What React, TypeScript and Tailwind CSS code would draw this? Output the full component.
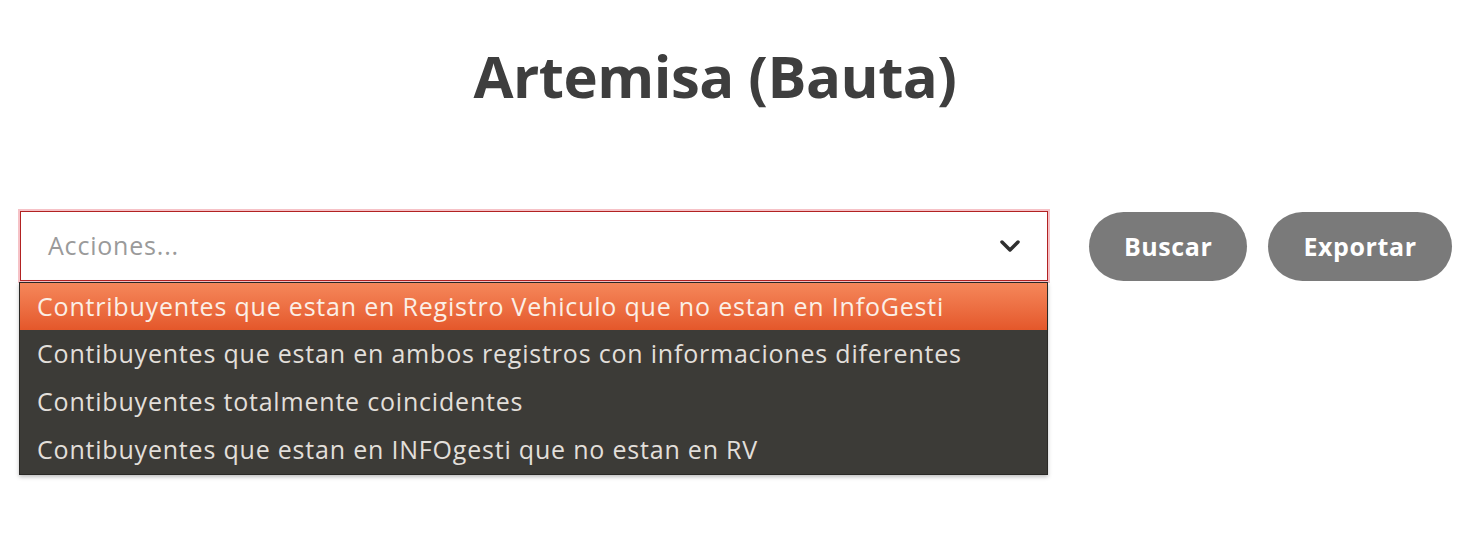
import React from "react";

const options = [
    "Contribuyentes que estan en Registro Vehiculo que no estan en InfoGesti",
    "Contibuyentes que estan en ambos registros con informaciones diferentes",
    "Contibuyentes totalmente coincidentes",
    "Contibuyentes que estan en INFOgesti que no estan en RV",
];

const App = () => {
    return (
        <div className="min-h-[544px] w-full bg-white font-['Open_Sans',sans-serif] text-[#3d3d3d]">
            <div className="px-5 pt-[36px]">
                {/* Titulo */}
                <h1 className="pr-[42px] text-center text-[58px] font-bold leading-[80px] tracking-[-0.5px] text-[#3e3e3e]">
                    Artemisa (Bauta)
                </h1>

                <div className="mt-[95px] flex items-start">
                    {/* Select con lista abierta */}
                    <div className="relative w-[1029px]">
                        <div className="flex h-[70px] items-center justify-between border border-[#b22222] bg-white pl-[27px] pr-[26px] shadow-[0_0_0_2px_rgba(236,120,130,0.45)]">
                            <span className="text-[25px] tracking-[0.8px] text-[#9a9a9a]">Acciones...</span>
                            <svg width="22" height="14" viewBox="0 0 22 14" fill="none">
                                <path d="M3 3l8 8 8-8" stroke="#2f2f2f" strokeWidth="3.5" strokeLinecap="round" strokeLinejoin="round" />
                            </svg>
                        </div>
                        <ul className="absolute left-[-1px] top-[71px] w-[1029px] border border-[#2a2926] bg-[#3c3b37] shadow-[0_2px_4px_rgba(0,0,0,0.25)]">
                            {options.map((opt, i) => (
                                <li
                                    key={opt}
                                    className={
                                        i === 0
                                            ? "flex h-[47px] items-center bg-gradient-to-b from-[#f5875a] to-[#e4572a] pl-[17px] text-[25px] tracking-[0.8px] text-[#fbefe6]"
                                            : "flex h-[48px] items-center pl-[17px] text-[25px] tracking-[0.8px] text-[#e2dfda]"
                                    }
                                >
                                    {opt}
                                </li>
                            ))}
                        </ul>
                    </div>

                    {/* Botones */}
                    <button className="ml-[41px] mt-[1px] h-[69px] w-[158px] rounded-full bg-[#7a7a7a] text-[25px] font-bold tracking-[0.6px] text-white">
                        Buscar
                    </button>
                    <button className="ml-[21px] mt-[1px] h-[69px] w-[184px] rounded-full bg-[#7a7a7a] text-[25px] font-bold tracking-[0.6px] text-white">
                        Exportar
                    </button>
                </div>
            </div>
        </div>
    );
};

export default App;
